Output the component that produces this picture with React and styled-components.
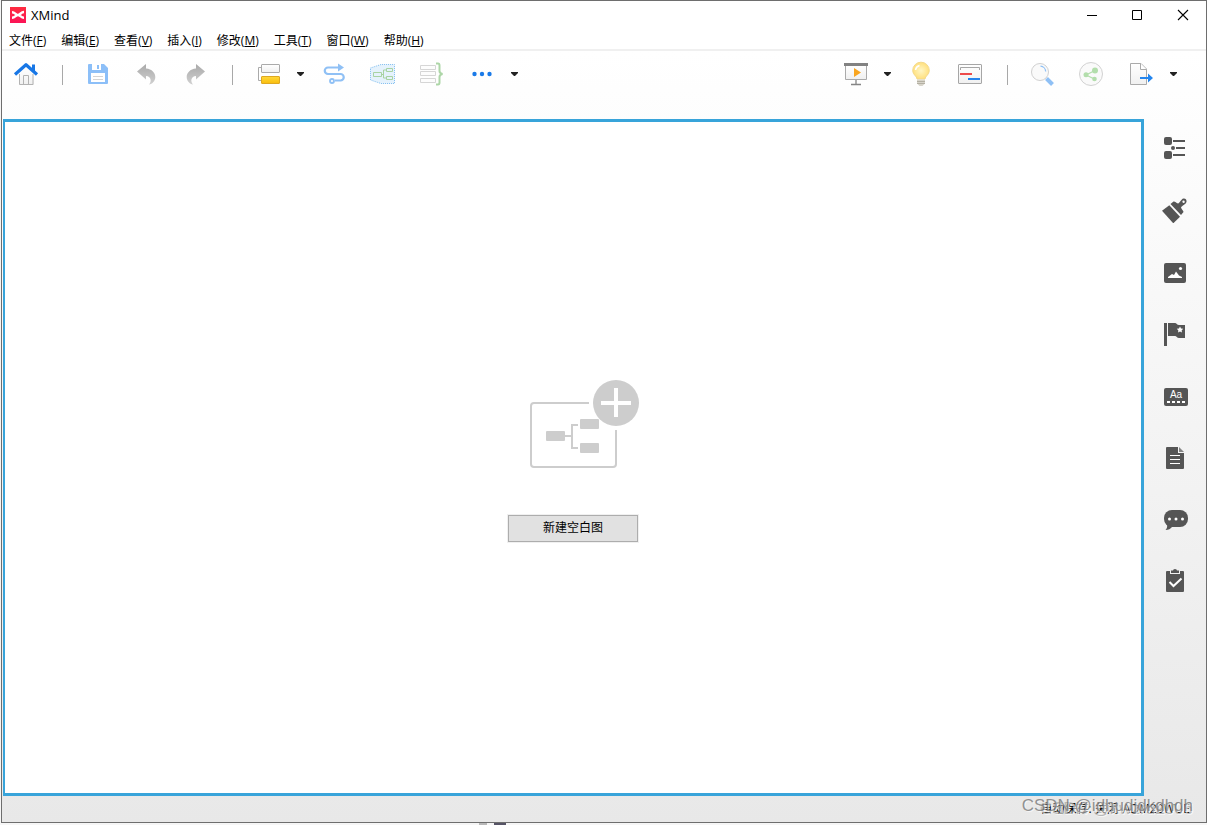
import React from "react";
import styled, { createGlobalStyle, css } from "styled-components";

const GlobalStyle = createGlobalStyle`
  * { box-sizing: border-box; }
  body {
    margin: 0;
    font-family: "Open Sans", "Noto Sans CJK SC", sans-serif;
    font-size: 12px;
    line-height: 16px;
    color: #000;
  }
  svg { display: block; }
`;

const Desktop = styled.div`
  display: flex;
  height: 100vh;
  padding: 0 0 2px 1px;
  background:
    linear-gradient(#b8b8b8, #b8b8b8) 479px 100% / 8px 2px no-repeat,
    linear-gradient(#565466, #565466) 494px 100% / 12px 2px no-repeat,
    #f6f6f6;
`;

const Window = styled.div`
  flex: 1;
  min-width: 0;
  display: flex;
  flex-direction: column;
  border: 1px solid #6e6e6e;
  background: #fff;
`;

const TitleBar = styled.header`
  display: flex;
  align-items: center;
  gap: 5px;
  height: 28px;
  padding-left: 8px;
`;

const Title = styled.h1`
  flex: 1;
  margin: 0;
  font-size: 13px;
  font-weight: 400;
`;

const plainButton = css`
  display: flex;
  align-items: center;
  justify-content: center;
  padding: 0;
  border: 0;
  background: none;
  font: inherit;
  color: inherit;
`;

const WindowControls = styled.div`
  display: flex;
`;

const WindowButton = styled.button`
  ${plainButton}
  width: 46px;
  height: 28px;
`;

const MenuBar = styled.nav`
  display: flex;
  gap: 15px;
  height: 22px;
  padding: 4px 7px 0;
  border-bottom: 2px solid #f0f0f0;
`;

const MenuItem = styled.button`
  ${plainButton}
  height: 16px;
  white-space: nowrap;
`;

const Body = styled.div`
  flex: 1;
  min-height: 0;
  display: flex;
  flex-direction: column;
  background: linear-gradient(#fff, #fdfdfd 10%, #e8e8e8);
`;

const Toolbar = styled.div`
  display: flex;
  justify-content: space-between;
  height: 68px;
  padding: 10px 24px 0 0;
`;

const ToolGroup = styled.div`
  display: flex;
  gap: 2px;
  height: 27px;
`;

const ToolRun = styled.div`
  display: flex;
`;

const ToolButton = styled.button`
  ${plainButton}
  width: 49px;
`;

const CaretButton = styled.button`
  ${plainButton}
  width: 16px;
`;

const Separator = styled.span`
  align-self: center;
  width: 1px;
  height: 20px;
  margin: 0 11px;
  background: #a8a8a8;
`;

const Main = styled.div`
  flex: 1;
  min-height: 0;
  display: flex;
`;

const Canvas = styled.main`
  flex: 1;
  display: flex;
  flex-direction: column;
  align-items: center;
  justify-content: center;
  gap: 47px;
  margin-left: 1px;
  padding-top: 6px;
  border: 3px solid #38a4da;
  border-left-width: 2px;
  background: #fff;
`;

const NewMapButton = styled.button`
  width: 130px;
  height: 27px;
  padding: 0;
  border: 1px solid #adadad;
  outline: 1px solid #f0f0f0;
  background: #e1e1e1;
  font: inherit;
  color: #000;
`;

const SideBar = styled.aside`
  display: flex;
  flex-direction: column;
  align-items: center;
  gap: 36px;
  width: 62px;
  padding-top: 16px;
`;

const SideButton = styled.button`
  ${plainButton}
  color: #555;
`;

const StatusBar = styled.footer`
  position: relative;
  display: flex;
  justify-content: flex-end;
  align-items: center;
  gap: 4px;
  height: 26px;
  padding-right: 16px;
  white-space: nowrap;
`;

const Watermark = styled.span`
  position: absolute;
  right: 13px;
  top: ${(p) => (p.$soft ? 3 : 0)}px;
  font-family: "Liberation Sans", sans-serif;
  font-size: 17px;
  line-height: 20px;
  color: ${(p) => (p.$soft ? "rgba(150,150,150,.6)" : "rgba(120,120,120,.8)")};
  text-shadow: 1px 1px 0 rgba(255, 255, 255, 0.6);
`;

const Tool = ({ label, children }) => (
  <ToolButton aria-label={label}>
    <svg width="27" height="27" viewBox="0 0 27 27" fill="none">{children}</svg>
  </ToolButton>
);

const Caret = ({ label }) => (
  <CaretButton aria-label={label}>
    <svg width="8" height="5" viewBox="0 0 8 5"><path d="M0 0h7v1L4 4H3L0 1z" fill="#222" /></svg>
  </CaretButton>
);

const Side = ({ label, children }) => (
  <SideButton aria-label={label}>
    <svg width="26" height="26" viewBox="0 0 26 26" fill="currentColor">{children}</svg>
  </SideButton>
);

const menus = [
  ["文件", "F"], ["编辑", "E"], ["查看", "V"], ["插入", "I"],
  ["修改", "M"], ["工具", "T"], ["窗口", "W"], ["帮助", "H"],
];

const Gradients = () => (
  <svg width="0" height="0" style={{ position: "absolute" }} aria-hidden="true">
    <defs>
      <linearGradient id="paper" x2="0" y2="1"><stop stopColor="#fff" /><stop offset="1" stopColor="#f0f0f0" /></linearGradient>
      <linearGradient id="gray" x2="0" y2="1"><stop stopColor="#a9a9a9" /><stop offset="1" stopColor="#d0d0d0" /></linearGradient>
      <linearGradient id="gold" x2="0" y2="1"><stop stopColor="#ffd83a" /><stop offset="1" stopColor="#f9bd0c" /></linearGradient>
      <linearGradient id="brand" x2="0" y2="1"><stop stopColor="#ff2d3f" /><stop offset="1" stopColor="#fb1457" /></linearGradient>
      <radialGradient id="bulb"><stop stopColor="#fff6c4" /><stop offset="1" stopColor="#ffe07e" /></radialGradient>
    </defs>
  </svg>
);

export default function App() {
  return (
    <Desktop>
      <GlobalStyle />
      <Gradients />
      <Window>
        <TitleBar>
          <svg width="16" height="16" viewBox="0 0 16 16">
            <path fill="url(#brand)" d="M0 0h16v16H0z" />
            <path d="M2 5.2C5 5.2 6 8 8 8s3-3 6-3M2 10.8C5 10.8 6 8 8 8s3 2.8 6 2.8" fill="none" stroke="#fff" strokeWidth="2.4" />
          </svg>
          <Title>XMind</Title>
          <WindowControls>
            <WindowButton aria-label="最小化">
              <svg width="12" height="12" viewBox="0 0 12 12"><path d="M2 6h10v1H2z" /></svg>
            </WindowButton>
            <WindowButton aria-label="最大化">
              <svg width="12" height="12" viewBox="0 0 12 12"><path d="M1.5 1.5h9v9h-9z" fill="none" stroke="#000" /></svg>
            </WindowButton>
            <WindowButton aria-label="关闭">
              <svg width="12" height="12" viewBox="0 0 12 12"><path d="m1 1 10 10M11 1 1 11" stroke="#000" strokeWidth="1.1" /></svg>
            </WindowButton>
          </WindowControls>
        </TitleBar>

        <MenuBar>
          {menus.map(([name, key]) => (
            <MenuItem key={key}><span>{name}(<u>{key}</u>)</span></MenuItem>
          ))}
        </MenuBar>

        <Body>
          <Toolbar>
            <ToolGroup>
              <ToolRun>
                <Tool label="主页">
                  <path d="M6 13 13 6l8 7v11H6z" fill="url(#paper)" />
                  <path d="M6.500 13v10.500h13.500V13M10.500 23.500v-9h5v9" stroke="#b3b3b3" />
                  <path d="M19 3.500h3V11l-3-2z" fill="#1877e6" />
                  <path d="m2 13.500 11-9.800 11 9.800" stroke="#1877e6" strokeWidth="3.200" strokeLinejoin="round" />
                </Tool>
                <Separator />
                <Tool label="保存">
                  <path d="M4 3h15l4 4v15a1 1 0 0 1-1 1H4a1 1 0 0 1-1-1V4a1 1 0 0 1 1-1z" fill="#8cbff8" />
                  <path d="M7 3h9v6H7zM6 12h14v9H6z" fill="#fff" />
                  <path d="M12 4h2v4h-2z" fill="#8cbff8" />
                  <path d="M8 15.500h10M8 18.500h10" stroke="#d4d4d4" />
                </Tool>
                <Tool label="撤销">
                  <path d="M3 10.500 12 3v4.500c6 .5 9.300 4.500 9.300 8.500 0 4-3 7-6.300 7.500 3-3.500 2-8-3-8.500v3.500z" fill="url(#gray)" />
                </Tool>
                <Tool label="重做">
                  <path d="M22 10.500 13 3v4.500C7 8 3.700 12 3.700 16c0 4 3 7 6.300 7.500C7 20 8 15.500 13 15v3.500z" fill="url(#gray)" />
                </Tool>
                <Separator />
                <Tool label="主题">
                  <path d="M6 6.500H3.500v13H6" stroke="#aaa" />
                  <rect x="6.500" y="3.500" width="18" height="8" rx=".5" fill="url(#paper)" stroke="#aaa" />
                  <rect x="6.500" y="15.500" width="18" height="7" rx=".5" fill="url(#gold)" stroke="#dea821" />
                </Tool>
                <Caret label="更多主题" />
                <Tool label="联系">
                  <path d="M19 6.500H8a3.250 3.250 0 0 0 0 6.500h12.500a3.250 3.250 0 0 1 0 6.500H15" stroke="#8fc0f5" strokeWidth="2.200" />
                  <circle cx="12" cy="20" r="2" stroke="#8fc0f5" strokeWidth="1.800" />
                  <path d="M18 2.500 24 6.500l-6 4z" fill="#8fc0f5" />
                </Tool>
                <Tool label="外框">
                  <path d="M1.500 7 12 3.500h13.500v19H12L1.500 19z" fill="#e5f2fc" stroke="#7fbdf0" strokeDasharray="1 1" />
                  <path d="M4.500 11.500h8v4h-8zM17.500 7.500h6v3h-6zM17.500 15.500h6v3h-6zM12.500 13.500h2M17 9h-2.500v8H17" stroke="#a8d3a2" />
                </Tool>
                <Tool label="概要">
                  <path d="M2.500 4.500h15v4h-15zM2.500 10.500h15v4h-15zM2.500 17.500h15v4h-15z" fill="#fdfdfd" stroke="#d6d6d6" />
                  <path d="M18 2.500h2c1.200 0 1.500.8 1.500 2v5.500c0 2 1 2.500 3 3-2 .5-3 1-3 3v5.500c0 1.200-.3 2-1.500 2h-2" stroke="#add6a7" strokeWidth="2" />
                </Tool>
              </ToolRun>
              <ToolRun>
                <Tool label="插入更多">
                  <g fill="#1a7ae8"><circle cx="5.500" cy="13" r="2.200" /><circle cx="13" cy="13" r="2.200" /><circle cx="20.500" cy="13" r="2.200" /></g>
                </Tool>
                <Caret label="展开插入菜单" />
              </ToolRun>
            </ToolGroup>

            <ToolGroup>
              <ToolRun>
                <Tool label="演示">
                  <path d="M3.500 4.500h21v14h-21z" fill="url(#paper)" stroke="#aaa" />
                  <path d="M2 2h24v3H2z" fill="#828282" />
                  <path d="m12 7 7 4.500-7 4.500z" fill="#f9a51f" />
                  <path d="M14 19v4M9 23.500h10" stroke="#858585" strokeWidth="1.300" />
                </Tool>
                <Caret label="演示选项" />
              </ToolRun>
              <ToolRun>
                <Tool label="头脑风暴">
                  <path d="M8 18c0-3-4.300-4-4.300-8.500a8.300 8.300 0 0 1 16.600 0C20.300 14 16 15 16 18z" fill="url(#bulb)" stroke="#f4d98a" />
                  <path d="M6.500 9a5.500 5.500 0 0 1 4-4.500" stroke="#fff" strokeWidth="1.500" />
                  <path d="M8 18.500h8v4L13.500 25h-3L8 22.500z" fill="#d8d5cb" />
                  <path d="M8 20.500h8M8 22.500h8" stroke="#b5b1a4" />
                </Tool>
                <Tool label="甘特图">
                  <rect x=".5" y="3.500" width="23" height="19" rx=".5" fill="url(#paper)" stroke="#a6a6a6" />
                  <path d="M2.500 9V6.500h19V9" stroke="#a6a6a6" />
                  <path d="M2 13h12" stroke="#ed4b4b" strokeWidth="2" />
                  <path d="M10 18h12" stroke="#2583eb" strokeWidth="2" />
                </Tool>
                <Separator />
                <Tool label="搜索">
                  <path d="m16.500 17.500 6 6" stroke="#8fc0f5" strokeWidth="4" />
                  <circle cx="10" cy="11" r="8.500" fill="#fafafa" stroke="#d0d0d0" />
                  <path d="M10.500 5.200a5.500 5.500 0 0 1 5.200 5.300" stroke="#8fc0f5" strokeWidth="1.300" />
                </Tool>
                <Tool label="分享">
                  <circle cx="12" cy="13" r="11.500" fill="#fafafa" stroke="#d2d2d2" />
                  <path d="M16 9.500 7 14l8.500 4" stroke="#b3deac" strokeWidth="1.300" />
                  <g fill="#b3deac"><circle cx="7" cy="13.800" r="2.500" /><circle cx="16" cy="9.500" r="3" /><circle cx="15.500" cy="18" r="2.300" /></g>
                </Tool>
                <Tool label="导出">
                  <path d="M2.500 2.500h10.500l5.500 5.500v15.500h-16z" fill="url(#paper)" stroke="#aaa" />
                  <path d="M12.500 2.500v6h6" fill="#fff" stroke="#aaa" />
                  <path d="M12 16h8v-3.500l5 4.500-5 4.500V18h-8z" fill="#2385ee" />
                </Tool>
                <Caret label="导出选项" />
              </ToolRun>
            </ToolGroup>
          </Toolbar>

          <Main>
            <Canvas>
              <svg width="132" height="88" viewBox="0 0 132 88" fill="none">
                <path d="M82 23H27a3 3 0 0 0-3 3v58a3 3 0 0 0 3 3h79a3 3 0 0 0 3-3V50" stroke="#cdcdcd" strokeWidth="2" />
                <path d="M58 56h6M71 45h-6v23h6" stroke="#cdcdcd" strokeWidth="2" />
                <g fill="#cdcdcd">
                  <rect x="39" y="51" width="19" height="10" rx="1" />
                  <rect x="73" y="39" width="19" height="10" rx="1" />
                  <rect x="73" y="63" width="19" height="10" rx="1" />
                  <circle cx="109" cy="23" r="23" />
                </g>
                <path d="M94 23h30M109 8v29" stroke="#fff" strokeWidth="4" />
              </svg>
              <NewMapButton>新建空白图</NewMapButton>
            </Canvas>

            <SideBar>
              <Side label="大纲">
                <rect x="2" y="2" width="8" height="8" rx="2" />
                <rect x="2" y="16" width="8" height="8" rx="2" />
                <circle cx="11" cy="13" r="2" />
                <path d="M11 5h12v2H11zM14 12h9v2h-9zM11 19h12v2H11z" />
              </Side>
              <Side label="格式">
                <path d="m0 13.700 7.300-5.400L18 19.700l-6.700 6.600z" />
                <path fillRule="evenodd" d="m8.500 7 3-2.500c1.500-.5 2.500 1.500 4.500 2 2-.5 3-4.500 5.500-5 2-.3 3.500 1.500 3 3.500-.8 2.500-4.500 3.500-5.500 5.500.5 2 2.500 3 2.500 4.500l-2.500 3zM21.500 3.500a1.200 1.200 0 1 0 .1 2.400 1.200 1.200 0 0 0-.1-2.400z" />
              </Side>
              <Side label="图片">
                <rect x="2" y="4" width="22" height="20" rx="2" />
                <path d="M6 19v-1l4-3 2 1 2-3.500 3 4 3 1.500v1z" fill="#fff" />
                <circle cx="18.500" cy="9.500" r="1.600" fill="#fff" />
              </Side>
              <Side label="图标">
                <path d="M2 2h3v23H2zM6 2h7c1.500 0 2 2 4 2h6v13h-6c-2 0-2.500-2-4-2H6z" />
                <path d="m18 5.500 1 2 2.200.3-1.600 1.600.4 2.200-2-1.100-2 1.100.4-2.200-1.600-1.600 2.200-.3z" fill="#fff" />
              </Side>
              <Side label="标签">
                <rect x="2" y="5" width="24" height="18" rx="2" />
                <text x="14" y="15" textAnchor="middle" fill="#fff" fontFamily="Liberation Sans, sans-serif" fontSize="10">Aa</text>
                <path d="M5 18h3v2H5zM10 18h3v2h-3zM15 18h3v2h-3zM20 18h3v2h-3z" fill="#fff" />
              </Side>
              <Side label="备注">
                <path d="M5 2h11v6h6v15a1 1 0 0 1-1 1H5a1 1 0 0 1-1-1V3a1 1 0 0 1 1-1z" />
                <path d="M17 2v5h5z" opacity=".7" />
                <path d="M8 10.500h10M8 14.500h10M8 18.500h10" stroke="#fff" />
              </Side>
              <Side label="批注">
                <rect x="2" y="3" width="24" height="17" rx="8" />
                <path d="M5 17c.5 2.500 0 4.500-1.500 6 3 0 5-1 7-3.500z" />
                <g fill="#fff"><circle cx="7.500" cy="12" r="1.500" /><circle cx="14" cy="12" r="1.500" /><circle cx="20.500" cy="12" r="1.500" /></g>
              </Side>
              <Side label="任务信息">
                <path d="M5 2h3v3h10V2h3a1 1 0 0 1 1 1v19a1 1 0 0 1-1 1H5a1 1 0 0 1-1-1V3a1 1 0 0 1 1-1z" />
                <path d="M9 1.500h2a2 1.500 0 0 1 4 0h2V4H9z" />
                <path d="m7.500 13 4 4 8-7.500" fill="none" stroke="#fff" strokeWidth="2" />
              </Side>
            </SideBar>
          </Main>

          <StatusBar>
            <Watermark $soft>CSDN @hwzru2006</Watermark>
            <span>自动保存: 关闭</span>
            <span>ADM20WUE</span>
            <Watermark>CSDN @idhudjdkdhdh</Watermark>
          </StatusBar>
        </Body>
      </Window>
    </Desktop>
  );
}
